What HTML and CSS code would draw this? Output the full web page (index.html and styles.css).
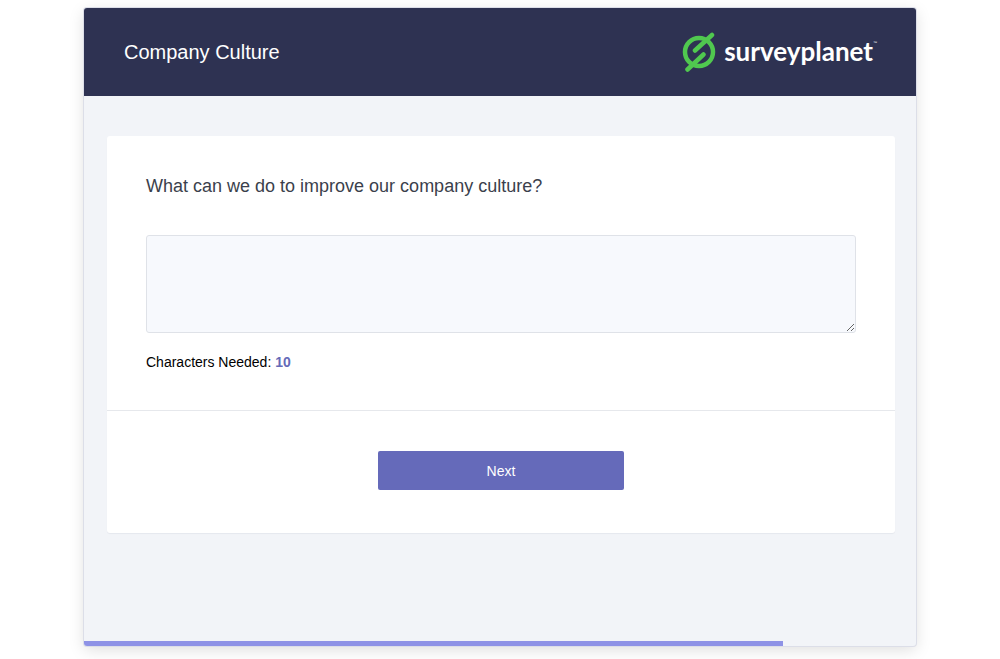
FILE: index.html
```html
<!DOCTYPE html>
<html lang="en">
<head>
<meta charset="utf-8">
<meta name="viewport" content="width=device-width, initial-scale=1">
<title>Company Culture</title>
<link rel="stylesheet" href="styles.css">
</head>
<body>
<div class="survey">
  <header class="survey-header">
    <h1 class="survey-title">Company Culture</h1>
    <div class="brand">
      <svg class="brand-mark" viewBox="0 0 34 40" aria-hidden="true">
        <g fill="none" stroke="#50c84f" stroke-width="4.500" stroke-linecap="round" stroke-linejoin="round">
          <circle cx="17" cy="20" r="14"/>
          <path d="M30 3 13 18.500M5.500 37.500 21.500 22.500"/>
        </g>
      </svg>
      <span class="brand-name">surveyplanet</span><span class="brand-tm">™</span>
    </div>
  </header>
  <main class="survey-body">
    <form class="card">
      <div class="question">
        <label class="question-text" for="answer">What can we do to improve our company culture?</label>
        <textarea class="answer" id="answer"></textarea>
        <p class="counter">Characters Needed: <strong class="count">10</strong></p>
      </div>
      <div class="actions">
        <button class="next" type="button">Next</button>
      </div>
    </form>
  </main>
  <div class="progress"><div class="progress-bar" style="width: 84%"></div></div>
</div>
</body>
</html>
```
FILE: styles.css
```css
* {
  box-sizing: border-box;
}

body {
  margin: 0;
  padding: 8px 84px 13px;
  background: #fff;
  color: #000;
  font-family: "Liberation Sans", Arial, sans-serif;
}

.survey {
  display: flex;
  flex-direction: column;
  min-height: calc(100vh - 21px);
  border-radius: 3px;
  overflow: hidden;
  background: #f2f4f8;
  box-shadow: 0 0 0 1px #dcdee8, 0 4px 16px rgba(0, 0, 0, 0.13);
}

.survey-header {
  display: flex;
  align-items: center;
  justify-content: space-between;
  min-height: 88px;
  padding: 0 39px 0 40px;
  background: #2e3252;
  color: #fff;
}

.survey-title {
  margin: 0;
  font-size: 20px;
  line-height: 24px;
  font-weight: 400;
}

.brand {
  display: flex;
  align-items: center;
}

.brand-mark {
  width: 34px;
  height: 40px;
  margin-right: 8px;
}

.brand-name {
  padding-bottom: 2px;
  font-family: Lato, sans-serif;
  font-size: 26px;
  line-height: 32px;
  font-weight: 700;
}

.brand-tm {
  align-self: flex-start;
  padding-top: 9px;
  font-size: 4px;
  line-height: 4px;
}

.survey-body {
  flex: 1;
  padding: 40px 21px 40px 23px;
}

.card {
  border-radius: 3px;
  background: #fff;
  box-shadow: 0 1px 1px rgba(40, 45, 80, 0.06);
}

.question {
  padding: 38px 39px;
  border-bottom: 1px solid #e6e8ec;
}

.question-text {
  display: block;
  margin-bottom: 37px;
  color: #3b3f4c;
  font-size: 18px;
  line-height: 24px;
}

.answer {
  display: block;
  width: 100%;
  height: 98px;
  padding: 12px;
  border: 1px solid #dfe2e8;
  border-radius: 3px;
  background: #f7f9fd;
  font: inherit;
  font-size: 14px;
  resize: vertical;
}

.counter {
  margin: 19px 0 0;
  font-size: 14px;
  line-height: 20px;
}

.count {
  color: #656ab8;
}

.actions {
  display: flex;
  justify-content: center;
  padding: 40px 20px 43px;
}

.next {
  width: 246px;
  height: 39px;
  border: 0;
  border-radius: 2px;
  background: #656aba;
  color: #fff;
  font: inherit;
  font-size: 14px;
}

.progress {
  height: 5px;
}

.progress-bar {
  height: 100%;
  background: #8e92e6;
}
```
